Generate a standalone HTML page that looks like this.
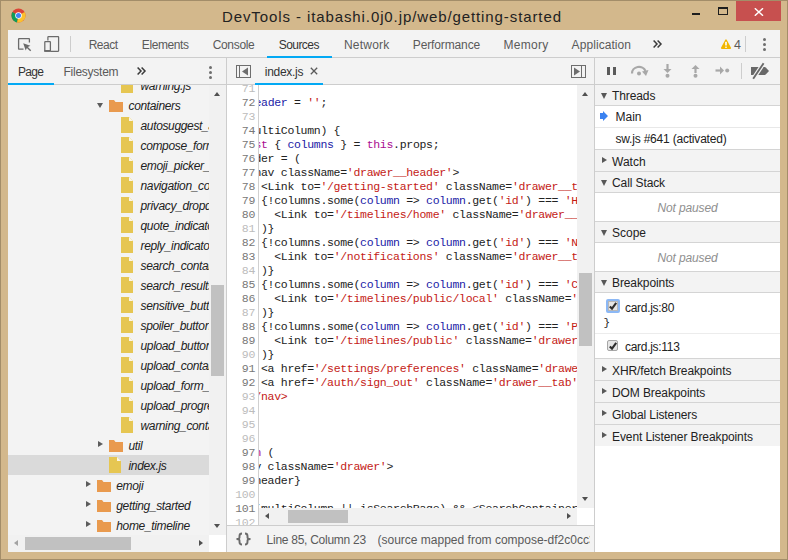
<!DOCTYPE html><html><head><meta charset="utf-8"><style>
*{margin:0;padding:0;box-sizing:border-box}
html,body{width:788px;height:560px;overflow:hidden}
body{position:relative;background:#d3b88c;font-family:"Liberation Sans",sans-serif;font-size:12px;color:#333}
.a{position:absolute;white-space:nowrap}
.hl{position:absolute;height:1px;background:#cdcdcd}
.vl{position:absolute;width:1px;background:#cdcdcd}
.tab{position:absolute;top:36px;font-size:12px;line-height:18px;color:#5a5a5a;white-space:nowrap}
.tr{position:absolute;height:20px;line-height:20px;font-style:italic;color:#222;white-space:nowrap;font-size:12px;letter-spacing:-0.35px}
.code{position:absolute;font-family:"Liberation Mono",monospace;font-size:11.5px;letter-spacing:-0.3px;line-height:14px;white-space:pre;color:#222}
.gut{position:absolute;font-family:"Liberation Mono",monospace;font-size:11.5px;letter-spacing:-0.3px;line-height:14px;white-space:pre;text-align:right;color:#bcbcbc}
.g2{color:#777}
.k{color:#aa0d91}.s{color:#c41a16}.v{color:#1a1aa6}
.sh{position:absolute;left:595px;width:185px;background:#f3f3f3;color:#222;font-size:12px;white-space:nowrap}
.sr{position:absolute;left:595px;width:185px;background:#fff;color:#222;font-size:12px;white-space:nowrap}
.np{position:absolute;left:595px;width:185px;background:#fff;color:#888;font-style:italic;text-align:center;font-size:12px}
</style></head><body>
<div class="a" style="left:0;top:0;width:788px;height:560px;border:1px solid #a38d69"></div>
<svg class="a" style="left:11px;top:8px" width="15" height="15" viewBox="0 0 16 16">
<circle cx="8" cy="8" r="7.5" fill="#db4437"/>
<path d="M8 8 L1.5 4.25 A7.5 7.5 0 0 0 6.5 15.35 Z" fill="#0f9d58"/>
<path d="M8 8 L6.5 15.35 A7.5 7.5 0 0 0 14.5 4.25 Z" fill="#fbc02d"/>
<circle cx="8" cy="8" r="3.5" fill="#fff"/>
<circle cx="8" cy="8" r="2.7" fill="#4285f4"/></svg>
<div class="a" style="left:222px;top:8px;font-size:15px;line-height:18px;color:#222;letter-spacing:0.9px">DevTools - itabashi.0j0.jp/web/getting-started</div>
<div class="a" style="left:692px;top:12.5px;width:8px;height:2.5px;background:#1e1e1e"></div>
<div class="a" style="left:718px;top:7px;width:10px;height:8px;border:1px solid #1e1e1e;border-top-width:2px"></div>
<div class="a" style="left:736px;top:1px;width:45px;height:20px;background:#c7504f"></div>
<svg class="a" style="left:754px;top:7.5px" width="10" height="8"><path d="M0.8 0.3 L9 7.7 M9 0.3 L0.8 7.7" stroke="#fff" stroke-width="1.5"/></svg>
<div class="a" style="left:8px;top:30px;width:772px;height:522px;background:#f3f3f3"></div>
<div class="hl" style="left:8px;top:57px;width:772px"></div>
<svg class="a" style="left:17px;top:37px" width="16" height="15" viewBox="0 0 16 15">
<path d="M6.5 12.2 H2.1 Q1.6 12.2 1.6 11.7 V2.1 Q1.6 1.6 2.1 1.6 H11.9 Q12.4 1.6 12.4 2.1 V5.6" fill="none" stroke="#6b6b6b" stroke-width="1.3"/>
<path d="M6.2 6.2 L13.4 8.7 L10.9 9.9 L14.2 13.2 L13.2 14.2 L9.9 10.9 L8.7 13.4 Z" fill="#6b6b6b"/></svg>
<svg class="a" style="left:43px;top:35px" width="17" height="18" viewBox="0 0 17 18">
<path d="M4.9 5.6 V2.2 Q4.9 1.7 5.4 1.7 H15.1 Q15.6 1.7 15.6 2.2 V15.8 Q15.6 16.3 15.1 16.3 H8" fill="none" stroke="#6b6b6b" stroke-width="1.25"/>
<rect x="1.8" y="6.5" width="5.6" height="9.7" rx="0.6" fill="none" stroke="#6b6b6b" stroke-width="1.25"/><rect x="1.2" y="15" width="6.8" height="1.8" fill="#6b6b6b"/></svg>
<div class="vl" style="left:70px;top:36px;height:16px"></div>
<div class="tab" id="tab_React" style="left:88.7px;color:#5a5a5a;letter-spacing:-0.5px">React</div>
<div class="tab" id="tab_Elements" style="left:141.8px;color:#5a5a5a;letter-spacing:-0.4px">Elements</div>
<div class="tab" id="tab_Console" style="left:212.7px;color:#5a5a5a;letter-spacing:-0.33px">Console</div>
<div class="tab" id="tab_Sources" style="left:278.7px;color:#333;letter-spacing:-0.55px">Sources</div>
<div class="tab" id="tab_Network" style="left:343.9px;color:#5a5a5a;letter-spacing:0.23px">Network</div>
<div class="tab" id="tab_Performance" style="left:412.8px;color:#5a5a5a;letter-spacing:-0.13px">Performance</div>
<div class="tab" id="tab_Memory" style="left:503.4px;color:#5a5a5a;letter-spacing:0.3px">Memory</div>
<div class="tab" id="tab_Application" style="left:571.6px;color:#5a5a5a;letter-spacing:0.07px">Application</div>
<svg class="a" style="left:652px;top:39px" width="11" height="10"><path d="M1.6 1.4 L5 4.9 L1.6 8.4 M5.6 1.4 L9 4.9 L5.6 8.4" fill="none" stroke="#3a3a3a" stroke-width="1.5"/></svg>
<div class="a" style="left:267px;top:56px;width:65px;height:2px;background:#03a9f4"></div>
<svg class="a" style="left:720px;top:38px" width="12" height="12" viewBox="0 0 12 12">
<path d="M6 2.2 L10.3 10.1 H1.7 Z" fill="#f2b600" stroke="#f2b600" stroke-width="1.6" stroke-linejoin="round"/><rect x="5.2" y="3.8" width="1.6" height="3.8" rx="0.5" fill="#fff"/><rect x="5.2" y="8.6" width="1.6" height="1.3" rx="0.4" fill="#fff"/></svg>
<div class="a" style="left:734px;top:36.5px;font-size:12.5px;line-height:16px;color:#5a5a5a">4</div>
<div class="vl" style="left:745px;top:36px;height:16px"></div>
<div class="a" style="left:763px;top:38px;width:3px;height:3px;border-radius:50%;background:#6e6e6e"></div>
<div class="a" style="left:763px;top:43px;width:3px;height:3px;border-radius:50%;background:#6e6e6e"></div>
<div class="a" style="left:763px;top:48px;width:3px;height:3px;border-radius:50%;background:#6e6e6e"></div>
<div class="hl" style="left:8px;top:84px;width:218px"></div>
<div class="vl" style="left:226px;top:58px;height:494px"></div>
<div class="a" style="left:18px;top:63px;font-size:12px;line-height:18px;color:#333;letter-spacing:-0.7px" id="nav_page">Page</div>
<div class="a" style="left:63.5px;top:63px;font-size:12px;line-height:18px;color:#5a5a5a;letter-spacing:-0.25px" id="nav_fs">Filesystem</div>
<svg class="a" style="left:136px;top:66px" width="11" height="10"><path d="M1.6 1.4 L5 4.9 L1.6 8.4 M5.6 1.4 L9 4.9 L5.6 8.4" fill="none" stroke="#3a3a3a" stroke-width="1.5"/></svg>
<div class="a" style="left:8px;top:83px;width:46px;height:2px;background:#03a9f4"></div>
<div class="a" style="left:209px;top:66px;width:3px;height:3px;border-radius:50%;background:#6e6e6e"></div>
<div class="a" style="left:209px;top:71px;width:3px;height:3px;border-radius:50%;background:#6e6e6e"></div>
<div class="a" style="left:209px;top:76px;width:3px;height:3px;border-radius:50%;background:#6e6e6e"></div>
<div class="a" style="left:8px;top:85px;width:201px;height:450px;overflow:hidden">
<svg class="a" style="left:113px;top:-8px" width="12" height="16" viewBox="0 0 12 16"><path d="M0 0 H8 L12 4 V16 H0 Z" fill="#e6c652"/><path d="M8 0 V4 H12 Z" fill="#fbf6e4"/></svg>
<div class="tr" style="left:132.5px;top:-9px">warning.js</div>
<div class="a" style="left:89px;top:18px;width:0;height:0;border-left:3.5px solid transparent;border-right:3.5px solid transparent;border-top:5px solid #5c5c5c"></div>
<svg class="a" style="left:101px;top:15px" width="14" height="12" viewBox="0 0 14 12"><path d="M0 0 H5 L6.5 2 H14 V12 H0 Z" fill="#e99a4e"/></svg>
<div class="tr" style="left:120.5px;top:11px">containers</div>
<svg class="a" style="left:113px;top:32px" width="12" height="16" viewBox="0 0 12 16"><path d="M0 0 H8 L12 4 V16 H0 Z" fill="#e6c652"/><path d="M8 0 V4 H12 Z" fill="#fbf6e4"/></svg>
<div class="tr" style="left:132.5px;top:31px">autosuggest_account_container.js</div>
<svg class="a" style="left:113px;top:52px" width="12" height="16" viewBox="0 0 12 16"><path d="M0 0 H8 L12 4 V16 H0 Z" fill="#e6c652"/><path d="M8 0 V4 H12 Z" fill="#fbf6e4"/></svg>
<div class="tr" style="left:132.5px;top:51px">compose_form_container.js</div>
<svg class="a" style="left:113px;top:72px" width="12" height="16" viewBox="0 0 12 16"><path d="M0 0 H8 L12 4 V16 H0 Z" fill="#e6c652"/><path d="M8 0 V4 H12 Z" fill="#fbf6e4"/></svg>
<div class="tr" style="left:132.5px;top:71px">emoji_picker_dropdown_container.js</div>
<svg class="a" style="left:113px;top:92px" width="12" height="16" viewBox="0 0 12 16"><path d="M0 0 H8 L12 4 V16 H0 Z" fill="#e6c652"/><path d="M8 0 V4 H12 Z" fill="#fbf6e4"/></svg>
<div class="tr" style="left:132.5px;top:91px">navigation_container.js</div>
<svg class="a" style="left:113px;top:112px" width="12" height="16" viewBox="0 0 12 16"><path d="M0 0 H8 L12 4 V16 H0 Z" fill="#e6c652"/><path d="M8 0 V4 H12 Z" fill="#fbf6e4"/></svg>
<div class="tr" style="left:132.5px;top:111px">privacy_dropdown_container.js</div>
<svg class="a" style="left:113px;top:132px" width="12" height="16" viewBox="0 0 12 16"><path d="M0 0 H8 L12 4 V16 H0 Z" fill="#e6c652"/><path d="M8 0 V4 H12 Z" fill="#fbf6e4"/></svg>
<div class="tr" style="left:132.5px;top:131px">quote_indicator_container.js</div>
<svg class="a" style="left:113px;top:152px" width="12" height="16" viewBox="0 0 12 16"><path d="M0 0 H8 L12 4 V16 H0 Z" fill="#e6c652"/><path d="M8 0 V4 H12 Z" fill="#fbf6e4"/></svg>
<div class="tr" style="left:132.5px;top:151px">reply_indicator_container.js</div>
<svg class="a" style="left:113px;top:172px" width="12" height="16" viewBox="0 0 12 16"><path d="M0 0 H8 L12 4 V16 H0 Z" fill="#e6c652"/><path d="M8 0 V4 H12 Z" fill="#fbf6e4"/></svg>
<div class="tr" style="left:132.5px;top:171px">search_container.js</div>
<svg class="a" style="left:113px;top:192px" width="12" height="16" viewBox="0 0 12 16"><path d="M0 0 H8 L12 4 V16 H0 Z" fill="#e6c652"/><path d="M8 0 V4 H12 Z" fill="#fbf6e4"/></svg>
<div class="tr" style="left:132.5px;top:191px">search_results_container.js</div>
<svg class="a" style="left:113px;top:212px" width="12" height="16" viewBox="0 0 12 16"><path d="M0 0 H8 L12 4 V16 H0 Z" fill="#e6c652"/><path d="M8 0 V4 H12 Z" fill="#fbf6e4"/></svg>
<div class="tr" style="left:132.5px;top:211px">sensitive_button_container.js</div>
<svg class="a" style="left:113px;top:232px" width="12" height="16" viewBox="0 0 12 16"><path d="M0 0 H8 L12 4 V16 H0 Z" fill="#e6c652"/><path d="M8 0 V4 H12 Z" fill="#fbf6e4"/></svg>
<div class="tr" style="left:132.5px;top:231px">spoiler_button_container.js</div>
<svg class="a" style="left:113px;top:252px" width="12" height="16" viewBox="0 0 12 16"><path d="M0 0 H8 L12 4 V16 H0 Z" fill="#e6c652"/><path d="M8 0 V4 H12 Z" fill="#fbf6e4"/></svg>
<div class="tr" style="left:132.5px;top:251px">upload_button_container.js</div>
<svg class="a" style="left:113px;top:272px" width="12" height="16" viewBox="0 0 12 16"><path d="M0 0 H8 L12 4 V16 H0 Z" fill="#e6c652"/><path d="M8 0 V4 H12 Z" fill="#fbf6e4"/></svg>
<div class="tr" style="left:132.5px;top:271px">upload_container.js</div>
<svg class="a" style="left:113px;top:292px" width="12" height="16" viewBox="0 0 12 16"><path d="M0 0 H8 L12 4 V16 H0 Z" fill="#e6c652"/><path d="M8 0 V4 H12 Z" fill="#fbf6e4"/></svg>
<div class="tr" style="left:132.5px;top:291px">upload_form_container.js</div>
<svg class="a" style="left:113px;top:312px" width="12" height="16" viewBox="0 0 12 16"><path d="M0 0 H8 L12 4 V16 H0 Z" fill="#e6c652"/><path d="M8 0 V4 H12 Z" fill="#fbf6e4"/></svg>
<div class="tr" style="left:132.5px;top:311px">upload_progress_container.js</div>
<svg class="a" style="left:113px;top:332px" width="12" height="16" viewBox="0 0 12 16"><path d="M0 0 H8 L12 4 V16 H0 Z" fill="#e6c652"/><path d="M8 0 V4 H12 Z" fill="#fbf6e4"/></svg>
<div class="tr" style="left:132.5px;top:331px">warning_container.js</div>
<div class="a" style="left:90px;top:356px;width:0;height:0;border-top:3.5px solid transparent;border-bottom:3.5px solid transparent;border-left:5.5px solid #5c5c5c"></div>
<svg class="a" style="left:101px;top:355px" width="14" height="12" viewBox="0 0 14 12"><path d="M0 0 H5 L6.5 2 H14 V12 H0 Z" fill="#e99a4e"/></svg>
<div class="tr" style="left:120.5px;top:351px">util</div>
<div class="a" style="left:0;top:370px;width:201px;height:20px;background:#dadada"></div>
<svg class="a" style="left:101px;top:372px" width="12" height="16" viewBox="0 0 12 16"><path d="M0 0 H8 L12 4 V16 H0 Z" fill="#e6c652"/><path d="M8 0 V4 H12 Z" fill="#fbf6e4"/></svg>
<div class="tr" style="left:120.5px;top:371px">index.js</div>
<div class="a" style="left:78px;top:396px;width:0;height:0;border-top:3.5px solid transparent;border-bottom:3.5px solid transparent;border-left:5.5px solid #5c5c5c"></div>
<svg class="a" style="left:89px;top:395px" width="14" height="12" viewBox="0 0 14 12"><path d="M0 0 H5 L6.5 2 H14 V12 H0 Z" fill="#e99a4e"/></svg>
<div class="tr" style="left:108.3px;top:391px">emoji</div>
<div class="a" style="left:78px;top:416px;width:0;height:0;border-top:3.5px solid transparent;border-bottom:3.5px solid transparent;border-left:5.5px solid #5c5c5c"></div>
<svg class="a" style="left:89px;top:415px" width="14" height="12" viewBox="0 0 14 12"><path d="M0 0 H5 L6.5 2 H14 V12 H0 Z" fill="#e99a4e"/></svg>
<div class="tr" style="left:108.3px;top:411px">getting_started</div>
<div class="a" style="left:78px;top:436px;width:0;height:0;border-top:3.5px solid transparent;border-bottom:3.5px solid transparent;border-left:5.5px solid #5c5c5c"></div>
<svg class="a" style="left:89px;top:435px" width="14" height="12" viewBox="0 0 14 12"><path d="M0 0 H5 L6.5 2 H14 V12 H0 Z" fill="#e99a4e"/></svg>
<div class="tr" style="left:108.3px;top:431px">home_timeline</div>
</div>
<div class="a" style="left:209px;top:85px;width:17px;height:450px;background:#f1f1f1"></div>
<div class="a" style="left:211px;top:285px;width:13px;height:91px;background:#c1c1c1"></div>
<div class="a" style="left:214px;top:92px;width:0;height:0;border-left:3.5px solid transparent;border-right:3.5px solid transparent;border-bottom:4px solid #505050"></div>
<div class="a" style="left:214px;top:524px;width:0;height:0;border-left:3.5px solid transparent;border-right:3.5px solid transparent;border-top:4px solid #505050"></div>
<div class="a" style="left:8px;top:535px;width:201px;height:17px;background:#f1f1f1"></div>
<div class="a" style="left:25px;top:537px;width:106px;height:13px;background:#c1c1c1"></div>
<div class="a" style="left:14px;top:540px;width:0;height:0;border-top:3.5px solid transparent;border-bottom:3.5px solid transparent;border-right:4.5px solid #a3a3a3"></div>
<div class="a" style="left:199px;top:540px;width:0;height:0;border-top:3.5px solid transparent;border-bottom:3.5px solid transparent;border-left:4.5px solid #505050"></div>
<div class="a" style="left:209px;top:535px;width:17px;height:17px;background:#fff"></div>
<div class="hl" style="left:227px;top:84px;width:367px"></div>
<div class="vl" style="left:594px;top:58px;height:494px"></div>
<svg class="a" style="left:236px;top:65px" width="15" height="13" viewBox="0 0 15 13">
<rect x="0.5" y="0.5" width="14" height="12" fill="none" stroke="#6e6e6e"/><path d="M3.5 1 V12" stroke="#6e6e6e"/><path d="M12 2.5 V10.5 L6 6.5 Z" fill="#6e6e6e"/></svg>
<div class="a" style="left:264.8px;top:63px;font-size:12px;line-height:18px;color:#333;letter-spacing:-0.3px" id="ed_tab">index.js</div>
<svg class="a" style="left:310px;top:67px" width="8" height="8"><path d="M0.8 0.8 L7.2 7.2 M7.2 0.8 L0.8 7.2" stroke="#5a5a5a" stroke-width="1.3"/></svg>
<div class="a" style="left:255px;top:83px;width:68px;height:2px;background:#03a9f4"></div>
<svg class="a" style="left:571px;top:65px" width="15" height="13" viewBox="0 0 15 13">
<rect x="0.5" y="0.5" width="14" height="12" fill="none" stroke="#6e6e6e"/><path d="M10.5 1 V12" stroke="#6e6e6e"/><path d="M3 2.5 V10.5 L9 6.5 Z" fill="#6e6e6e"/></svg>
<div class="a" style="left:227px;top:85px;width:350px;height:440px;background:#fff"></div>
<div class="vl" style="left:258px;top:85px;height:440px;background:#d0d0d0"></div>
<div class="a" style="left:227px;top:85px;width:31px;height:440px;overflow:hidden">
<div class="gut" style="left:0;width:28px;top:-3px"><span class="">71</span>
<span class="g2">72</span>
<span class="">73</span>
<span class="g2">74</span>
<span class="g2">75</span>
<span class="g2">76</span>
<span class="g2">77</span>
<span class="g2">78</span>
<span class="g2">79</span>
<span class="g2">80</span>
<span class="">81</span>
<span class="g2">82</span>
<span class="g2">83</span>
<span class="">84</span>
<span class="g2">85</span>
<span class="g2">86</span>
<span class="">87</span>
<span class="g2">88</span>
<span class="g2">89</span>
<span class="">90</span>
<span class="g2">91</span>
<span class="g2">92</span>
<span class="">93</span>
<span class="">94</span>
<span class="">95</span>
<span class="">96</span>
<span class="g2">97</span>
<span class="g2">98</span>
<span class="g2">99</span>
<span class="">100</span>
<span class="g2">101</span>
<span class="">102</span></div></div>
<div class="a" style="left:259px;top:85px;width:318px;height:423px;overflow:hidden">
<div class="code" style="left:-64px;top:-3px">
    <span class="k">let</span> <span class="v">header</span> = <span class="s">&#x27;&#x27;</span>;

    if (multiColumn) {
      <span class="k">const</span> { <span class="v">columns</span> } = <span class="k">this</span>.props;
      header = (
        &lt;nav className=<span class="s">&#x27;drawer__header&#x27;</span>&gt;
          &lt;Link to=<span class="s">&#x27;/getting-started&#x27;</span> className=<span class="s">&#x27;drawer__tab&#x27;</span>
          {!columns.some(<span class="v">column</span> =&gt; <span class="v">column</span>.get(<span class="s">&#x27;id&#x27;</span>) === <span class="s">&#x27;HOME&#x27;</span>
            &lt;Link to=<span class="s">&#x27;/timelines/home&#x27;</span> className=<span class="s">&#x27;drawer__tab&#x27;</span>
          )}
          {!columns.some(<span class="v">column</span> =&gt; <span class="v">column</span>.get(<span class="s">&#x27;id&#x27;</span>) === <span class="s">&#x27;NOTIFICATIONS&#x27;</span>
            &lt;Link to=<span class="s">&#x27;/notifications&#x27;</span> className=<span class="s">&#x27;drawer__tab&#x27;</span>
          )}
          {!columns.some(<span class="v">column</span> =&gt; <span class="v">column</span>.get(<span class="s">&#x27;id&#x27;</span>) === <span class="s">&#x27;COMMUNITY&#x27;</span>
            &lt;Link to=<span class="s">&#x27;/timelines/public/local&#x27;</span> className=<span class="s">&#x27;drawer__tab&#x27;</span>
          )}
          {!columns.some(<span class="v">column</span> =&gt; <span class="v">column</span>.get(<span class="s">&#x27;id&#x27;</span>) === <span class="s">&#x27;PUBLIC&#x27;</span>
            &lt;Link to=<span class="s">&#x27;/timelines/public&#x27;</span> className=<span class="s">&#x27;drawer__tab&#x27;</span>
          )}
          &lt;a href=<span class="s">&#x27;/settings/preferences&#x27;</span> className=<span class="s">&#x27;drawer__tab&#x27;</span>
          &lt;a href=<span class="s">&#x27;/auth/sign_out&#x27;</span> className=<span class="s">&#x27;drawer__tab&#x27;</span>
        &lt;<span class="s">/nav&gt;</span>
      );
    }

    <span class="k">return</span> (
      &lt;div className=<span class="s">&#x27;drawer&#x27;</span>&gt;
        {header}

        {(multiColumn || isSearchPage) &amp;&amp; &lt;SearchContainer /&gt;}
</div></div>
<div class="a" style="left:577px;top:85px;width:17px;height:423px;background:#f1f1f1"></div>
<div class="a" style="left:579px;top:273px;width:13px;height:73px;background:#c1c1c1"></div>
<div class="a" style="left:582px;top:92px;width:0;height:0;border-left:3.5px solid transparent;border-right:3.5px solid transparent;border-bottom:4px solid #505050"></div>
<div class="a" style="left:582px;top:497px;width:0;height:0;border-left:3.5px solid transparent;border-right:3.5px solid transparent;border-top:4px solid #505050"></div>
<div class="a" style="left:259px;top:508px;width:318px;height:17px;background:#f1f1f1"></div>
<div class="a" style="left:288px;top:510px;width:60px;height:13px;background:#c1c1c1"></div>
<div class="a" style="left:265px;top:513px;width:0;height:0;border-top:3.5px solid transparent;border-bottom:3.5px solid transparent;border-right:4.5px solid #505050"></div>
<div class="a" style="left:567px;top:513px;width:0;height:0;border-top:3.5px solid transparent;border-bottom:3.5px solid transparent;border-left:4.5px solid #505050"></div>
<div class="a" style="left:577px;top:508px;width:17px;height:17px;background:#fff"></div>
<div class="hl" style="left:227px;top:525px;width:367px"></div>
<svg class="a" style="left:235px;top:532px" width="18" height="14" viewBox="0 0 18 14"><path d="M7 1.5 Q4.5 1.5 4.5 4 V5.5 Q4.5 7 1.5 7 Q4.5 7 4.5 8.5 V10 Q4.5 12.5 7 12.5 M10 1.5 Q12.5 1.5 12.5 4 V5.5 Q12.5 7 15.5 7 Q12.5 7 12.5 8.5 V10 Q12.5 12.5 10 12.5" fill="none" stroke="#6b6b6b" stroke-width="1.9"/></svg>
<div class="a" style="left:266.6px;top:532px;font-size:12px;line-height:16px;color:#5a5a5a;letter-spacing:-0.27px" id="st1">Line 85, Column 23</div>
<div class="a" style="left:377.5px;top:532px;width:212px;overflow:hidden;font-size:12px;line-height:16px;color:#5a5a5a;letter-spacing:0px" id="st2">(source mapped from compose-df2c0cc3.js)</div>
<div class="hl" style="left:595px;top:84px;width:185px"></div>
<div class="a" style="left:607px;top:67px;width:3px;height:8px;background:#5a5a5a"></div>
<div class="a" style="left:613px;top:67px;width:3px;height:8px;background:#5a5a5a"></div>
<svg class="a" style="left:630px;top:64px" width="20" height="13" viewBox="0 0 20 13">
<path d="M2 9.5 A7 6.5 0 0 1 15.5 7" fill="none" stroke="#a8a8a8" stroke-width="2.2"/>
<path d="M12 7.5 L18.5 6 L16 12 Z" fill="#a8a8a8"/><circle cx="9" cy="9.5" r="2" fill="#a8a8a8"/></svg>
<svg class="a" style="left:663px;top:64px" width="9" height="14" viewBox="0 0 9 14">
<path d="M4.5 0 V7" stroke="#a8a8a8" stroke-width="2.2"/><path d="M0.5 5 H8.5 L4.5 9 Z" fill="#a8a8a8"/><circle cx="4.5" cy="11.8" r="2" fill="#a8a8a8"/></svg>
<svg class="a" style="left:691px;top:64px" width="9" height="14" viewBox="0 0 9 14">
<path d="M4.5 9 V3" stroke="#a8a8a8" stroke-width="2.2"/><path d="M0.5 5 H8.5 L4.5 1 Z" fill="#a8a8a8"/><circle cx="4.5" cy="11.8" r="2" fill="#a8a8a8"/></svg>
<svg class="a" style="left:715px;top:66px" width="15" height="9" viewBox="0 0 15 9">
<path d="M0.5 4.5 H6" stroke="#a8a8a8" stroke-width="2.2"/><path d="M5 0.5 V8.5 L9 4.5 Z" fill="#a8a8a8"/><circle cx="12.2" cy="4.5" r="2" fill="#a8a8a8"/></svg>
<div class="vl" style="left:741px;top:63px;height:16px"></div>
<svg class="a" style="left:750px;top:62px" width="20" height="18" viewBox="0 0 20 18">
<path d="M1 5.1 H14.8 Q15.3 5.1 15.7 5.5 L19 9 L15.7 12.5 Q15.3 12.9 14.8 12.9 H1 Z" fill="#686868"/><path d="M3.2 16.8 L13.6 1.2" stroke="#f3f3f3" stroke-width="4.2"/><path d="M3.2 16.8 L13.6 1.2" stroke="#686868" stroke-width="1.9"/></svg>
<div class="a" style="left:595px;top:85px;width:185px;height:467px;background:#fff"></div>
<div class="sh" style="top:85px;height:20px"></div>
<div class="a" style="left:601px;top:92.5px;width:0;height:0;border-left:3.5px solid transparent;border-right:3.5px solid transparent;border-top:6px solid #585858"></div>
<div class="a" style="left:612px;top:87.5px;font-size:12px;line-height:17px;color:#222;letter-spacing:-0.1px">Threads</div>
<div class="hl" style="left:595px;top:105px;width:185px;background:#d4d4d4"></div>
<div class="hl" style="left:595px;top:127px;width:185px;background:#e8e8e8"></div>
<svg class="a" style="left:600px;top:111px" width="8" height="10" viewBox="0 0 8 10"><path d="M0 2 H3 V0 L8 5 L3 10 V8 H0 Z" fill="#3b82f0"/></svg>
<div class="a" style="left:615.5px;top:109px;font-size:12px;line-height:17px;color:#222">Main</div>
<div class="a" style="left:615.5px;top:131px;font-size:12px;line-height:17px;color:#222;letter-spacing:-0.2px">sw.js #641 (activated)</div>
<div class="hl" style="left:595px;top:149px;width:185px;background:#d4d4d4"></div>
<div class="sh" style="top:150px;height:21px"></div>
<div class="a" style="left:602px;top:157.0px;width:0;height:0;border-top:3.5px solid transparent;border-bottom:3.5px solid transparent;border-left:5px solid #585858"></div>
<div class="a" style="left:612px;top:153.5px;font-size:12px;line-height:17px;color:#222;letter-spacing:0px">Watch</div>
<div class="hl" style="left:595px;top:171px;width:185px;background:#d4d4d4"></div>
<div class="sh" style="top:172px;height:20px"></div>
<div class="a" style="left:601px;top:179.5px;width:0;height:0;border-left:3.5px solid transparent;border-right:3.5px solid transparent;border-top:6px solid #585858"></div>
<div class="a" style="left:612px;top:174.5px;font-size:12px;line-height:17px;color:#222;letter-spacing:-0.1px">Call Stack</div>
<div class="hl" style="left:595px;top:192px;width:185px;background:#d4d4d4"></div>
<div class="a" style="left:595px;top:200px;width:185px;text-align:center;font-style:italic;color:#8f8f8f;font-size:12px;line-height:17px;letter-spacing:-0.15px">Not paused</div>
<div class="hl" style="left:595px;top:221px;width:185px;background:#d4d4d4"></div>
<div class="sh" style="top:222px;height:20px"></div>
<div class="a" style="left:601px;top:229.5px;width:0;height:0;border-left:3.5px solid transparent;border-right:3.5px solid transparent;border-top:6px solid #585858"></div>
<div class="a" style="left:612px;top:224.5px;font-size:12px;line-height:17px;color:#222;letter-spacing:0px">Scope</div>
<div class="hl" style="left:595px;top:242px;width:185px;background:#d4d4d4"></div>
<div class="a" style="left:595px;top:250px;width:185px;text-align:center;font-style:italic;color:#8f8f8f;font-size:12px;line-height:17px;letter-spacing:-0.15px">Not paused</div>
<div class="hl" style="left:595px;top:271px;width:185px;background:#d4d4d4"></div>
<div class="sh" style="top:272px;height:20px"></div>
<div class="a" style="left:601px;top:279.5px;width:0;height:0;border-left:3.5px solid transparent;border-right:3.5px solid transparent;border-top:6px solid #585858"></div>
<div class="a" style="left:612px;top:274.5px;font-size:12px;line-height:17px;color:#222;letter-spacing:-0.1px">Breakpoints</div>
<div class="hl" style="left:595px;top:292px;width:185px;background:#d4d4d4"></div>
<div class="a" style="left:606px;top:299px;width:14px;height:14px;border:2px solid #8cb8f5;border-radius:2px;background:#e6e6e6;box-shadow:inset 0 0 0 1px #b8b8b8"></div>
<svg class="a" style="left:606px;top:299px" width="14" height="14"><path d="M3.8 7.4 L6 9.6 L10.2 3.9" fill="none" stroke="#2e2e2e" stroke-width="2.1"/></svg>
<div class="a" style="left:625px;top:299.5px;font-size:12px;line-height:17px;color:#222;letter-spacing:-0.3px">card.js:80</div>
<div class="a" style="left:603.5px;top:315px;font-family:'Liberation Mono',monospace;font-size:11px;line-height:17px;color:#222">}</div>
<div class="hl" style="left:595px;top:333px;width:185px;background:#ececec"></div>
<div class="a" style="left:607px;top:340px;width:11px;height:11px;border:1px solid #a6a6a6;border-radius:2px;background:#e6e6e6"></div>
<svg class="a" style="left:606px;top:339px" width="14" height="14"><path d="M3.8 7.4 L6 9.6 L10.2 3.9" fill="none" stroke="#2e2e2e" stroke-width="2.1"/></svg>
<div class="a" style="left:625px;top:339px;font-size:12px;line-height:17px;color:#222;letter-spacing:-0.3px">card.js:113</div>
<div class="hl" style="left:595px;top:358px;width:185px;background:#d4d4d4"></div>
<div class="sh" style="top:359px;height:21px"></div>
<div class="a" style="left:602px;top:366.0px;width:0;height:0;border-top:3.5px solid transparent;border-bottom:3.5px solid transparent;border-left:5px solid #585858"></div>
<div class="a" style="left:612px;top:362.5px;font-size:12px;line-height:17px;color:#222;letter-spacing:-0.1px">XHR/fetch Breakpoints</div>
<div class="hl" style="left:595px;top:380px;width:185px;background:#d4d4d4"></div>
<div class="sh" style="top:381px;height:21px"></div>
<div class="a" style="left:602px;top:388.0px;width:0;height:0;border-top:3.5px solid transparent;border-bottom:3.5px solid transparent;border-left:5px solid #585858"></div>
<div class="a" style="left:612px;top:384.5px;font-size:12px;line-height:17px;color:#222;letter-spacing:-0.1px">DOM Breakpoints</div>
<div class="hl" style="left:595px;top:402px;width:185px;background:#d4d4d4"></div>
<div class="sh" style="top:403px;height:21px"></div>
<div class="a" style="left:602px;top:410.0px;width:0;height:0;border-top:3.5px solid transparent;border-bottom:3.5px solid transparent;border-left:5px solid #585858"></div>
<div class="a" style="left:612px;top:406.5px;font-size:12px;line-height:17px;color:#222;letter-spacing:-0.1px">Global Listeners</div>
<div class="hl" style="left:595px;top:424px;width:185px;background:#d4d4d4"></div>
<div class="sh" style="top:425px;height:21px"></div>
<div class="a" style="left:602px;top:432.0px;width:0;height:0;border-top:3.5px solid transparent;border-bottom:3.5px solid transparent;border-left:5px solid #585858"></div>
<div class="a" style="left:612px;top:428.5px;font-size:12px;line-height:17px;color:#222;letter-spacing:-0.1px">Event Listener Breakpoints</div>
<div class="a" style="left:595px;top:446px;width:185px;height:106px;background:#fff"></div>
</body></html>
